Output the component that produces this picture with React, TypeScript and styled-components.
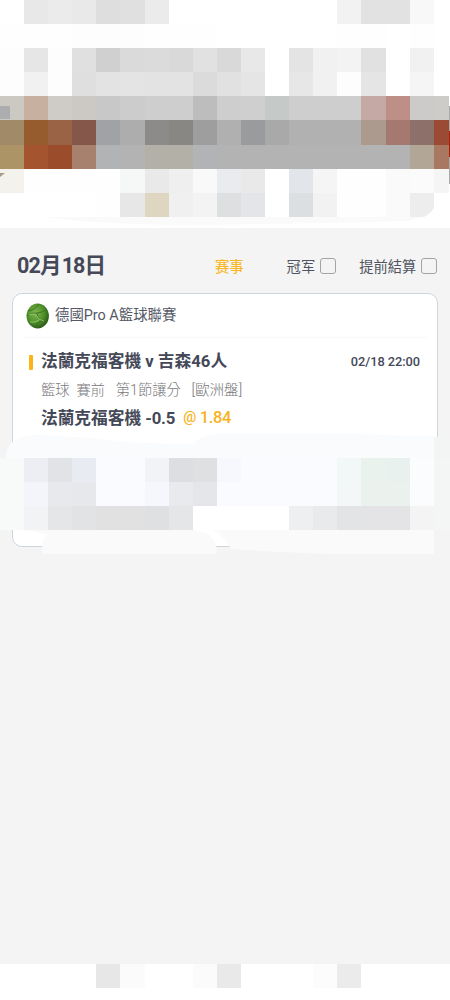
import React from "react";
import styled, { createGlobalStyle } from "styled-components";

const GlobalStyle = createGlobalStyle`
  * { box-sizing: border-box; }
  body { margin: 0; background: #f4f4f4; }
`;

const CELL = 24.1;

const Page = styled.div`
  position: relative;
  display: flex;
  flex-direction: column;
  width: 450px;
  height: 1000px;
  overflow: hidden;
  background: #f4f4f4;
  color: #444857;
  font-family: Roboto, "Noto Sans CJK TC", sans-serif;
`;

const Masthead = styled.header`
  position: relative;
  height: 228px;
  flex: none;
  overflow: hidden;
  background: #fff;
`;

const Mosaic = styled.div`
  display: grid;
  grid-template-columns: repeat(19, ${CELL}px);
  grid-auto-rows: ${CELL}px;
  width: 450px;
  overflow: hidden;
`;

const Tile = styled.span<{ $tone: string }>`
  background: ${(p) => p.$tone};
`;

const Scraps = styled.svg`
  position: absolute;
  left: 0;
  top: 0;
  width: 450px;
`;

const FilterBar = styled.section`
  display: flex;
  align-items: center;
  height: 65px;
  padding: 11px 12px 0 17px;
  flex: none;
`;

const DateHeading = styled.h1`
  flex: none;
  width: 198px;
  margin: 0;
  display: flex;
  align-items: baseline;
  font-size: 21.5px;
  line-height: 30px;
  font-weight: 700;
  white-space: nowrap;
`;

const Digits = styled.span<{ $size: number; $gap?: number; $before?: number; $weight?: number }>`
  font-size: ${(p) => p.$size}px;
  letter-spacing: ${(p) => p.$gap ?? 0}px;
  margin-left: ${(p) => p.$before ?? 0}px;
  font-weight: ${(p) => p.$weight ?? "inherit"};
`;

const Filter = styled.button<{ $active?: boolean; $offset?: number }>`
  display: flex;
  align-items: center;
  gap: 5px;
  margin: 0 0 0 ${(p) => p.$offset ?? 0}px;
  padding: 0;
  border: 0;
  background: none;
  color: ${(p) => (p.$active ? "#f7b928" : "#505462")};
  font: ${(p) => (p.$active ? 500 : 400)} 14.3px/20px "Noto Sans CJK SC", sans-serif;
  white-space: nowrap;
`;

const Checkbox = styled.span`
  width: 16px;
  height: 16px;
  border: 1px solid #a4a4a6;
  border-radius: 3px;
`;

const Card = styled.article`
  height: 254px;
  margin: 0 12px;
  border: 1px solid #ccd6df;
  border-radius: 10px;
  background: #fff;
  flex: none;
`;

const League = styled.div`
  display: flex;
  align-items: center;
  gap: 5px;
  height: 44px;
  margin: 0 10px;
  padding: 0 0 0 3px;
  border-bottom: 1px solid #f8f8f8;
  font-size: 14.4px;
  line-height: 22px;
  color: #555966;
`;

const Bet = styled.div`
  display: flex;
  flex-direction: column;
  padding: 10px 17px 0 15px;
`;

const Line = styled.div<{ $muted?: boolean }>`
  display: flex;
  align-items: center;
  height: 28px;
  padding-left: 13px;
  font-size: ${(p) => (p.$muted ? 14.3 : 16.7)}px;
  font-weight: ${(p) => (p.$muted ? 300 : 700)};
  line-height: 24px;
  color: ${(p) => (p.$muted ? "#78787b" : "#444857")};
  white-space: pre;
`;

const Marker = styled.span`
  width: 4px;
  height: 15px;
  margin: 0 8.5px 0 -12.5px;
  border-radius: 1px;
  background: #fbb316;
`;

const Kickoff = styled.time`
  margin: -1px 0 0 auto;
  font-size: 12.8px;
  letter-spacing: -0.05px;
  font-weight: 500;
`;

const Odds = styled.span`
  display: flex;
  align-items: center;
  gap: 4px;
  margin-left: 8px;
  color: #f7b21c;
  font-weight: 500;
`;

const CardMosaic = styled.div`
  position: absolute;
  left: 0;
  top: 457.9px;
`;

const Footer = styled.footer`
  margin-top: auto;
  height: 36px;
  background: #fff;
  flex: none;
`;

const g = (v: string) => "#" + v + v + v;
const expand = (row: string) => row.split(" ").map((c) => (c.length === 2 ? g(c) : "#" + c));

const topRows = [
  "ff e8 eb e9 de e0 eb ff ff ff ff ff ff ff f2 e2 e2 f8 ff",
  "fe fe fe fd fd fd fe fe fe ff ff ff ff ff fe fe ff fe ff",
  "fd e6 fd e0 d0 da db d9 e1 d9 e8 ff e4 f1 f3 e1 ff f1 ff",
  "fd f1 fd df e3 e4 e3 e3 db e1 e5 ff e7 f1 fd e5 ff f5 ff",
  "ccc8c2 c8b0a0 cfcbc6 ccc9c4 c8 cc ce ce bd ce cf c5c9c8 ce ce ce c5a9a5 bd8f87 cdcbca cdccc9",
  "a08a68 965c2e 9a6345 85564a a0a2a5 ad 8c8b89 888784 9e b0 999b9d a9 b1 b1 b1 ab9a8d a67970 8d706a 9b4a33",
  "ad9467 a4542e 9a4c2b a8806e b2b3b4 b3 b3b0a7 b3b0a8 b2b3b4 b3 b3 b3 b3 b3 b3 b3 b3 b2a696 a97860",
  "f3f2ed fe fe fe fe f6f8f8 e9e9ea ef f9 e9ebee e9 ff e2e5ea f5 fe fe fa fb f5",
  "ff ff ff ff fe e7 dfd6c1 f0 f3 dedfe1 e3e5e8 ff dcdfe2 f2 fe fe fa ed ff",
];

const cardRows = [
  "f8faf9 edeef4 e2e3e7 e9ebf2 f9fbff f9fbff f1f3f7 dddee1 dfe0e2 f6f8fd f9fbff f9fbff f9fbff f9fbff f2f7f8 eaf2ee e9f1ee fbfcfd f4f5f5",
  "f8faf9 f3f5fb e8e9ed e7e8ec f9fbff f9fbff f5f7fc e9eaee e5e6ea f9fbff f9fbff f9fbff f9fbff f9fbff f3f7f8 ebf2ee ebf2ee fbfcfd f4f5f5",
  "f8faf9 f2f3f5 e5e6e8 e2e3e4 e1e1e2 e1 dfe0e1 e5e6e8 ff ff ff ff eeeff1 e9eaec e3e4e5 e4e4e6 e4e4e6 f4f4f5 f4f5f5",
];

const footRows = ["ff ff ff ff e7 fb ff ff fb e9 ff ff ff fc eb ff ff ff ff"];

const Tiles = ({ rows }: { rows: string[] }) => (
  <Mosaic>
    {rows.flatMap((row, r) => expand(row).map((tone, c) => <Tile key={`${r}-${c}`} $tone={tone} />))}
  </Mosaic>
);

const Basketball = () => (
  <svg width="24" height="26" viewBox="0 0 24 26">
    <defs>
      <radialGradient id="ball" cx=".4" cy=".38" r=".65">
        <stop offset="0" stopColor="#7fb950" />
        <stop offset=".6" stopColor="#4f9029" />
        <stop offset="1" stopColor="#285817" />
      </radialGradient>
    </defs>
    <ellipse cx="11.7" cy="13" rx="11.2" ry="12.4" fill="url(#ball)" />
    <g fill="none" stroke="#34691f" strokeWidth=".8">
      <path d="M2 8Q9 7 13 1M1 13Q7 9 11 10Q16 10 21 6M11 10Q11 16 20 19M8 24Q12 19 18 17" />
    </g>
    <path d="M3 12Q7 10 10 12Q12 17 18 18M4 19Q9 20 13 17" fill="none" stroke="#a2cd78" strokeWidth=".8" />
  </svg>
);

export default function App() {
  return (
    <Page>
      <GlobalStyle />
      <Masthead>
        <Tiles rows={topRows} />
        <Scraps height="228" viewBox="0 0 450 228">
          <path d="M0 106H10V119H0Z" fill="#acadae" />
          <path d="M0 173H5L0 177Z" fill="#a49c88" />
          <path d="M42 217H424L408 221Q300 224 180 225Q100 224 42 217Z" fill="#fafafa" />
          <path d="M434 208V217H424Q430 214 434 208Z" fill="#fff" />
          <path d="M449 96H450V106H449ZM449 184H450V193H449Z" fill="#fff" />
          <path d="M449 106H450V184H449Z" fill="#aaa" />
          <path d="M449 131H450V157H449Z" fill="#b31c08" />
        </Scraps>
      </Masthead>

      <FilterBar>
        <DateHeading>
          <Digits $size={21.5} $gap={-0.9}>02</Digits>月
          <Digits $size={21.5} $gap={-0.9} $before={0.3}>18</Digits>日
        </DateHeading>
        <Filter $active>赛事</Filter>
        <Filter $offset={43}>冠军<Checkbox /></Filter>
        <Filter $offset={23}>提前結算<Checkbox /></Filter>
      </FilterBar>

      <Card>
        <League>
          <Basketball />
          <span>德國Pro A籃球聯賽</span>
        </League>
        <Bet>
          <Line>
            <Marker />
            <span>法蘭克福客機 v 吉森46人</span>
            <Kickoff>02/18 22:00</Kickoff>
          </Line>
          <Line $muted>
            <span>籃球</span>
            <Digits $size={14.1} $before={7}>賽前</Digits>
            <Digits $size={14.3} $before={11}>第1節讓分</Digits>
            <Digits $size={14.6} $before={10.5}>[歐洲盤]</Digits>
          </Line>
          <Line>
            <span>法蘭克福客機 <Digits $size={16.75} $gap={-0.2}>-0.5</Digits></span>
            <Odds>
              <Digits $size={14.5} $gap={-0.5}>@</Digits>
              <Digits $size={16.5} $gap={-0.35}>1.84</Digits>
            </Odds>
          </Line>
        </Bet>
      </Card>

      <Footer>
        <Tiles rows={footRows} />
      </Footer>

      <Scraps height="560" viewBox="0 0 450 560">
        <path d="M6 453Q10 436 35 435Q90 437 125 442Q165 444 193 444Q200 435 218 434H360Q400 436 434 436V459H24V475H12Q5 468 6 453Z" fill="#fafbfc" />
        <path d="M434 437H450V530H434Z" fill="#f3f5f4" />
        <path d="M0 475H12L24 458V530H0Z" fill="#f8faf9" />
        <path d="M24 530Q38 532 46 534Q41 542 42 554H217Q218 542 206 533L193 530Z" fill="#fafafa" />
        <path d="M434 530H450V554H434Z" fill="#f4f4f4" />
        <path d="M206 530H434V554H330Q270 552 231 549Q225 537 213 530Z" fill="#fafafa" />
      </Scraps>
      <CardMosaic>
        <Tiles rows={cardRows} />
      </CardMosaic>
    </Page>
  );
}
